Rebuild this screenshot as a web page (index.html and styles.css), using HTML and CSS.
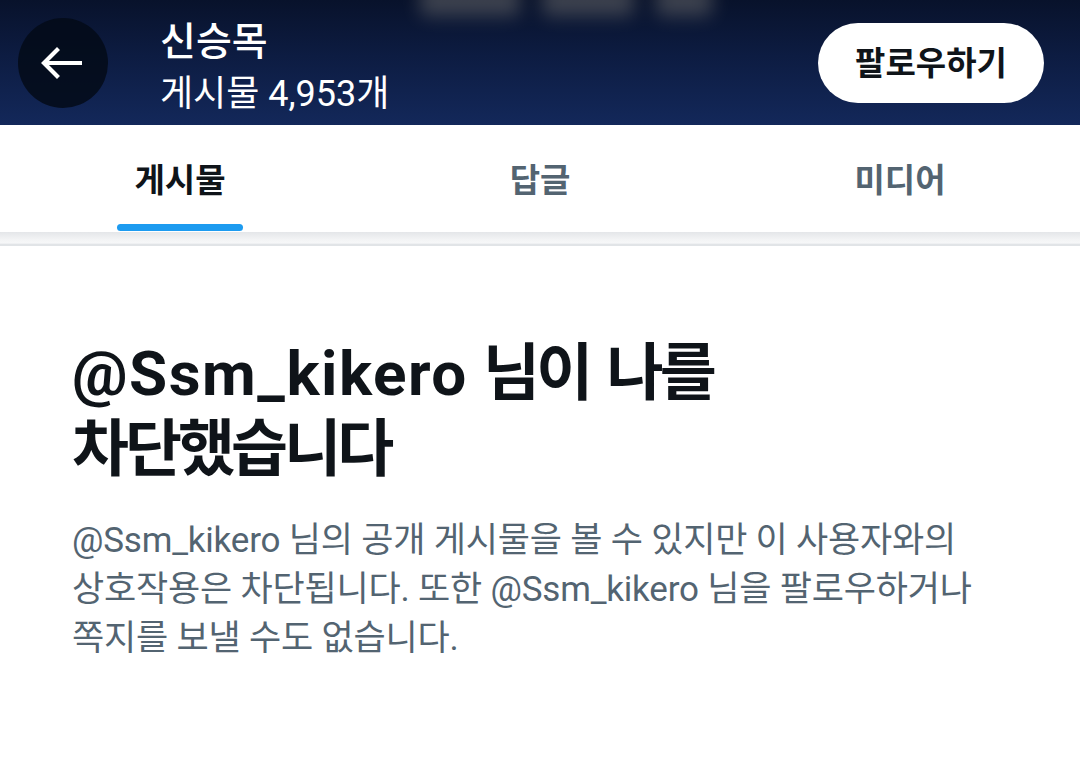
FILE: index.html
```html
<!DOCTYPE html>
<html lang="ko">
<head>
<meta charset="utf-8">
<link rel="stylesheet" href="styles.css">
</head>
<body>
<header class="top">
  <div class="blob"><span></span><span></span><span></span></div>
  <button class="back" aria-label="뒤로">
    <svg width="42" height="32" viewBox="0 0 42 32"><path d="M40 16H5M17 3L4 16l13 13" fill="none" stroke="#fff" stroke-width="4.2" stroke-linecap="square"/></svg>
  </button>
  <div class="title">
    <div class="name">신승목</div>
    <div class="count">게시물 4,953개</div>
  </div>
  <button class="follow">팔로우하기</button>
</header>
<nav class="tabs">
  <div class="tab active"><span>게시물</span><i class="bar"></i></div>
  <div class="tab"><span>답글</span></div>
  <div class="tab"><span>미디어</span></div>
</nav>
<div class="shade"></div>
<main class="blocked">
  <h1 class="heading"><span class="lat">@Ssm_kikero</span> <span class="ko">님이 나를</span><br><span class="ko">차단했습니다</span></h1>
  <p class="desc">@Ssm_kikero 님의 공개 게시물을 볼 수 있지만 이 사용자와의 상호작용은 차단됩니다. 또한 @Ssm_kikero 님을 팔로우하거나 쪽지를 보낼 수도 없습니다.</p>
</main>
</body>
</html>
```
FILE: styles.css
```css
* { box-sizing: border-box; }
html, body { margin: 0; padding: 0; background: #fff; }
body {
  width: 1080px;
  height: 763px;
  overflow: hidden;
  font-family: Roboto, "Noto Sans CJK KR", sans-serif;
}
.top {
  position: relative;
  height: 125px;
  background: linear-gradient(180deg, #08122b 0%, #0d1c42 45%, #13285a 100%);
  display: flex;
  align-items: center;
  padding: 0 36px 0 18px;
  overflow: hidden;
}
.blob {
  position: absolute;
  left: 420px;
  top: -16px;
  display: flex;
  gap: 22px;
  filter: blur(9px);
  opacity: 0.5;
}
.blob span { display: block; height: 32px; background: #707070; border-radius: 6px; }
.blob span:nth-child(1) { width: 100px; }
.blob span:nth-child(2) { width: 92px; }
.blob span:nth-child(3) { width: 56px; }
.back {
  width: 90px;
  height: 90px;
  border-radius: 50%;
  border: 0;
  background: rgba(4, 10, 24, 0.85);
  display: flex;
  align-items: center;
  justify-content: center;
  padding: 0 4px 0 0;
  flex: none;
}
.title {
  margin-left: 52px;
  color: #fff;
  flex: 1;
  align-self: flex-start;
  padding-top: 18px;
  display: flex;
  flex-direction: column;
}
.name { font-size: 39px; line-height: 48px; font-weight: 500; }
.count { margin-top: 6px; font-size: 36px; line-height: 44px; font-weight: 400; }
.follow {
  width: 226px;
  height: 80px;
  border-radius: 40px;
  border: 0;
  background: #fff;
  color: #0f1419;
  font-family: Roboto, "Noto Sans CJK KR", sans-serif;
  font-size: 33px;
  font-weight: 700;
  padding: 0 0 4px;
  flex: none;
}
.tabs {
  display: flex;
  height: 107px;
  background: #fff;
}
.tab {
  flex: 1;
  position: relative;
  display: flex;
  align-items: center;
  justify-content: center;
  font-size: 33px;
  font-weight: 700;
  color: #536471;
  padding-bottom: 2px;
}
.tab.active { color: #0f1419; }
.bar {
  position: absolute;
  bottom: 1px;
  left: 117px;
  width: 126px;
  height: 7px;
  border-radius: 4px;
  background: #1d9bf0;
}
.shade {
  height: 14px;
  background: linear-gradient(180deg, #e4e6e9 0%, #f3f4f5 55%, #f6f7f8 80%, #e1e4e7 86%, #e1e4e7 100%);
}
.blocked { padding: 90px 72px 0; }
.heading {
  margin: 0;
  font-size: 62px;
  line-height: 76px;
  font-weight: 700;
  color: #0f1419;
}
.heading .lat { letter-spacing: 1.5px; }
.heading .ko { letter-spacing: -4px; word-spacing: 6px; }
.desc {
  margin: 28px 0 0;
  font-size: 35px;
  line-height: 49px;
  color: #536471;
  font-weight: 400;
  word-break: keep-all;
  letter-spacing: -0.2px;
}
```
